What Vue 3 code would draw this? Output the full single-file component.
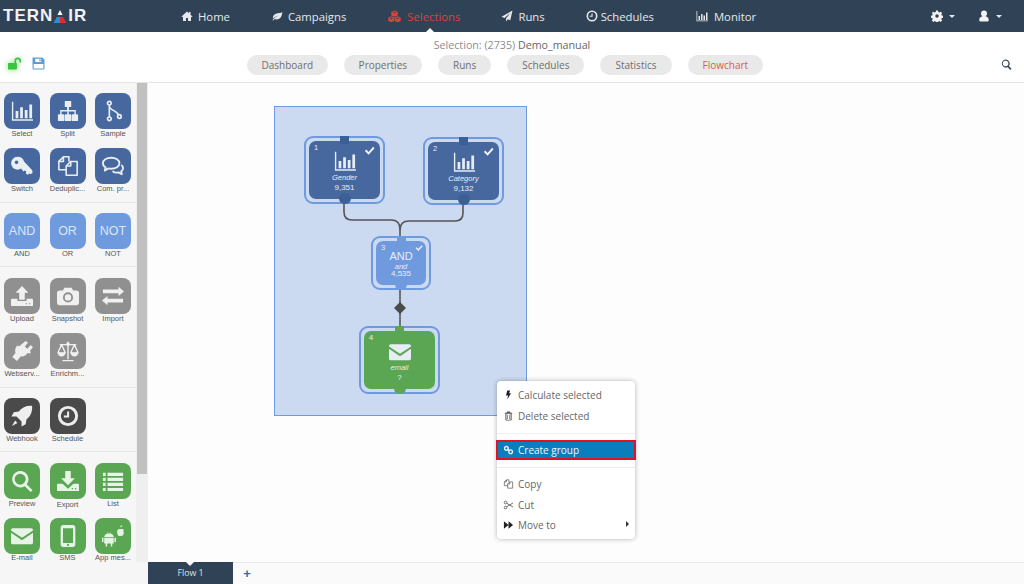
<script setup>
const nav = [
  { label: 'Home', icon: 'home' },
  { label: 'Campaigns', icon: 'leaf' },
  { label: 'Selections', icon: 'cubes', active: true },
  { label: 'Runs', icon: 'plane' },
  { label: 'Schedules', icon: 'clock' },
  { label: 'Monitor', icon: 'chart' },
]
const tabs = ['Dashboard', 'Properties', 'Runs', 'Schedules', 'Statistics', 'Flowchart']
const palette = [
  { tone: 'blue', items: [['Select', 'chart'], ['Split', 'sitemap'], ['Sample', 'fork'], ['Switch', 'key'], ['Deduplic...', 'copy'], ['Com. pr...', 'comments']] },
  { tone: 'light', items: [['AND', '', 'AND'], ['OR', '', 'OR'], ['NOT', '', 'NOT']] },
  { tone: 'grey', items: [['Upload', 'upload'], ['Snapshot', 'camera'], ['Import', 'exchange'], ['Webserv...', 'plug'], ['Enrichm...', 'scale']] },
  { tone: 'dark', items: [['Webhook', 'rocket'], ['Schedule', 'clock']] },
  { tone: 'green', items: [['Preview', 'search'], ['Export', 'download'], ['List', 'list'], ['E-mail', 'mail'], ['SMS', 'mobile'], ['App mes...', 'android']] },
]
const nodes = [
  { n: 1, cls: 'n1 blue big', icon: 'chart', name: 'Gender', value: '9,351', check: true },
  { n: 2, cls: 'n2 blue big', icon: 'chart', name: 'Category', value: '9,132', check: true },
  { n: 3, cls: 'n3 light small', word: 'AND', name: 'and', value: '4,535', check: true },
  { n: 4, cls: 'n4 green big', icon: 'mail', name: 'email', value: '?', check: false },
]
</script>

<template>
  <div class="app">
    <svg class="defs" width="0" height="0" aria-hidden="true">
      <symbol id="home" viewBox="0 0 24 24"><path d="M12 3 1 13l1.4 1.5L4 13.2V22h6v-6h4v6h6v-8.800l1.600 1.300L23 13l-4-3.600V4h-3v2.700z"/></symbol>
      <symbol id="leaf" viewBox="0 0 24 24"><path d="M23 4C20 7 12 5 7 9c-3 2.400-3.600 5.600-3 8 3-3 7-5 11-6-4 2-8 4.500-12 9l1.500 1c1-1.200 2-2.300 3-3.200 3 1.700 8 1.200 11-1.800 3.500-3.500 3.500-9 4.500-12z"/></symbol>
      <symbol id="cubes" viewBox="0 0 24 24"><path fill-rule="evenodd" d="M12 1l6 2.500V10l-6 2.500L6 10V3.500zM6 11.500l5.500 2.300v6.400L6 22.500.5 20.200v-6.400zM18 11.500l5.500 2.300v6.400L18 22.500l-5.500-2.300v-6.400zM12 3 9 4.200 12 5.500l3-1.300zM6 14l-3 1.200 3 1.300 3-1.300zM18 14l-3 1.200 3 1.300 3-1.300z"/></symbol>
      <symbol id="plane" viewBox="0 0 24 24"><path d="M23 1 1 13.500l6 2.500L19 5.500 10 17v6l3.500-4.500 5 2z"/></symbol>
      <symbol id="clock" viewBox="0 0 24 24"><path fill-rule="evenodd" d="M12 1a11 11 0 1 0 0 22 11 11 0 0 0 0-22zm0 3.200a7.800 7.800 0 1 1 0 15.600 7.800 7.800 0 0 1 0-15.600zM11 7h2.200v6.500H7.500v-2H11z"/></symbol>
      <symbol id="chart" viewBox="0 0 24 24"><path d="M1 2h1.500v19H24v1.500H1zM5 12h3v8H5zM10 8h3v12h-3zM15 11h3v9h-3zM20 5h3v15h-3z"/></symbol>
      <symbol id="cog" viewBox="0 0 24 24"><path fill-rule="evenodd" d="M10 1h4l.6 3 2.300 1 2.600-1.700 2.800 2.800-1.700 2.600 1 2.300 3 .6v4l-3 .6-1 2.300 1.700 2.600-2.800 2.800-2.600-1.700-2.300 1-.6 3h-4l-.6-3-2.300-1-2.600 1.700-2.800-2.800 1.700-2.600-1-2.300-3-.6v-4l3-.6 1-2.300L1.700 6.100l2.800-2.800 2.600 1.700 2.300-1zM12 8.500a3.500 3.500 0 1 0 0 7 3.500 3.500 0 0 0 0-7z"/></symbol>
      <symbol id="user" viewBox="0 0 24 24"><path d="M12 1a6 6 0 0 1 6 6c0 2.500-1.300 4.500-3 5.500 4 .5 6.500 3 6.500 7.500 0 2-1.500 3-3 3h-13c-1.500 0-3-1-3-3 0-4.500 2.500-7 6.500-7.500C7.300 11.500 6 9.500 6 7a6 6 0 0 1 6-6z"/></symbol>
      <symbol id="lock" viewBox="0 0 24 24"><path d="M1 11h14a1.500 1.500 0 0 1 1.500 1.500v9A1.500 1.500 0 0 1 15 23H1a1 1 0 0 1-1-1V12a1 1 0 0 1 1-1zM12 11V7a6 6 0 0 1 12 0v3h-3V7a3 3 0 0 0-6 0v4z"/></symbol>
      <symbol id="save" viewBox="0 0 24 24"><path fill-rule="evenodd" d="M2 1h17l4 4v16a2 2 0 0 1-2 2H3a2 2 0 0 1-2-2V2a1 1 0 0 1 1-1zm4 2v6h11V3zm7.500 1H16v4h-2.500zM3 13v8h18v-8z"/></symbol>
      <symbol id="find" viewBox="0 0 24 24"><path fill-rule="evenodd" d="M10 1a9 9 0 0 1 7.200 14.400L23 21.200 20.200 24l-5.800-5.800A9 9 0 1 1 10 1zm0 3a6 6 0 1 0 0 12 6 6 0 0 0 0-12z"/></symbol>
      <symbol id="sitemap" viewBox="0 0 24 24"><path d="M8.500 1h7v6.500H13V11h7.500v4.500H22a1 1 0 0 1 1 1V22a1 1 0 0 1-1 1h-5a1 1 0 0 1-1-1v-5.500a1 1 0 0 1 1-1h2V12.500h-6.200v3H14.500a1 1 0 0 1 1 1V22a1 1 0 0 1-1 1h-5a1 1 0 0 1-1-1v-5.500a1 1 0 0 1 1-1h1.700v-3H5v3h2a1 1 0 0 1 1 1V22a1 1 0 0 1-1 1H2a1 1 0 0 1-1-1v-5.500a1 1 0 0 1 1-1h1.500V11H11V7.500H8.500z"/></symbol>
      <symbol id="fork" viewBox="0 0 24 24"><g fill="none" stroke="currentColor" stroke-width="1.800"><circle cx="8" cy="3.500" r="2"/><circle cx="8" cy="20.500" r="2"/><circle cx="19" cy="18" r="2"/><path d="M8 5.500v13M8 6.500c0 5 9 5 10 10"/></g></symbol>
      <symbol id="key" viewBox="0 0 24 24"><path fill-rule="evenodd" d="M7.500 2a7 7 0 0 1 6.700 5l9 9.500.3 3-2.500 1.500-1.500-1-1 1.800-2.300-1.600.4-2.400-2-1-1.100 1.300-2.400-3.300A7 7 0 1 1 7.500 2zM6 6a2 2 0 1 0 0 4 2 2 0 0 0 0-4z"/></symbol>
      <symbol id="copy" viewBox="0 0 24 24"><g fill="none" stroke="currentColor" stroke-width="1.700" stroke-linejoin="round"><path d="M10 16H2V7l5-5h6v5"/><path d="M2 7h5V2"/><path d="M10 12l5-5h7v15H10z"/><path d="M10 12h5V7"/></g></symbol>
      <symbol id="comments" viewBox="0 0 24 24"><g fill="none" stroke="currentColor" stroke-width="2" stroke-linejoin="round"><path d="M10 3c5 0 9 2.500 9 6s-4 6-9 6c-1 0-2 0-3-.3L3 17l1-3.500C2 12.500 1 11 1 9c0-3.500 4-6 9-6z"/><path d="M21 11c1.500 1 2 2.500 2 3.500 0 1.500-1 2.500-2 3.500l.6 3-3.600-2c-2.500.5-5 0-6.500-1.500"/></g></symbol>
      <symbol id="upload" viewBox="0 0 24 24"><path fill-rule="evenodd" d="M12 1l7 7.500h-4V16H9V8.500H5zM1 15h6v2.500h10V15h6a1 1 0 0 1 1 1v6a1 1 0 0 1-1 1H1a1 1 0 0 1-1-1v-6a1 1 0 0 1 1-1zm15 5v1h1.500v-1zm3.500 0v1H21v-1z"/></symbol>
      <symbol id="download" viewBox="0 0 24 24"><path fill-rule="evenodd" d="M9 1h6v8h4.500L12 16.500 4.500 9H9zM1 15h5l6 5.500 6-5.500h5a1 1 0 0 1 1 1v6a1 1 0 0 1-1 1H1a1 1 0 0 1-1-1v-6a1 1 0 0 1 1-1zm15 4.500v1.500h1.500v-1.500zm3.500 0v1.500H21v-1.500z"/></symbol>
      <symbol id="camera" viewBox="0 0 24 24"><path fill-rule="evenodd" d="M8 3h8l1.500 3H21a3 3 0 0 1 3 3v10a3 3 0 0 1-3 3H3a3 3 0 0 1-3-3V9a3 3 0 0 1 3-3h3.500zM12 8a5.500 5.500 0 1 0 0 11 5.500 5.500 0 0 0 0-11zm0 2a3.500 3.500 0 1 1 0 7 3.500 3.500 0 0 1 0-7z"/></symbol>
      <symbol id="exchange" viewBox="0 0 24 24"><path d="M18 2l6 5-6 5V9H1V5h17zM6 12v3h17v4H6v3l-6-5z"/></symbol>
      <symbol id="plug" viewBox="0 0 24 24"><path d="M16 1l2.500 2L15 7l3 2.500 3.500-4L24 8l-3.500 4 1.500 1-2 2-1.500-1c-2 3-5 4.500-8 4l-4 5-5-4.500 3.500-4.500c-1-2-.5-5 1-7L5 8l2-2 1.500 1.200z"/></symbol>
      <symbol id="scale" viewBox="0 0 24 24"><g fill="none" stroke="currentColor" stroke-width="1.500" stroke-linejoin="round"><path d="M12 2v19M6 22.500h12M3 5h18"/><path d="M5 5 1 14h8zM19 5l-4 9h8z"/></g><path d="M1 14h8a4 4 0 0 1-8 0zM15 14h8a4 4 0 0 1-8 0z"/><circle cx="12" cy="4.500" r="2"/></symbol>
      <symbol id="rocket" viewBox="0 0 24 24"><path d="M23 1c.5 6-1.500 11-6 14.500L16 21l-4.500 2.500V18l-5.500-5.500H.5L3 8l5.500-1C12 2.500 17 .5 23 1zM4.500 17l2.500 2.500L1 23z"/></symbol>
      <symbol id="search" viewBox="0 0 24 24"><path fill-rule="evenodd" d="M10 1a9 9 0 0 1 7.100 14.500L23.500 22 21.500 24l-6.500-6.300A9 9 0 1 1 10 1zm0 3a6 6 0 1 0 0 12 6 6 0 0 0 0-12z"/></symbol>
      <symbol id="list" viewBox="0 0 24 24"><path d="M1 3h3v3.500H1zM6 3h17v3.500H6zM1 8.500h3V12H1zM6 8.500h17V12H6zM1 14h3v3.500H1zM6 14h17v3.500H6zM1 19.500h3V23H1zM6 19.500h17V23H6z"/></symbol>
      <symbol id="mail" viewBox="0 0 24 24"><path d="M2 3.500h20a2 2 0 0 1 2 2v.500L12 14 0 6v-.5a2 2 0 0 1 2-2zM0 8.500l12 8 12-8V19a2 2 0 0 1-2 2H2a2 2 0 0 1-2-2z"/></symbol>
      <symbol id="mobile" viewBox="0 0 24 24"><path fill-rule="evenodd" d="M7 0h10a3 3 0 0 1 3 3v18a3 3 0 0 1-3 3H7a3 3 0 0 1-3-3V3a3 3 0 0 1 3-3zM6.500 3.500v16h11v-16zM12 20.500a1.200 1.200 0 1 0 0 2.400 1.200 1.200 0 0 0 0-2.400z"/></symbol>
      <symbol id="android" viewBox="0 0 24 24"><g transform="translate(0 5) scale(.8)"><path d="M3 10c.3-2.500 2-4 4.500-4.400L7 4l.6-.3.7 1.700h2.400l.7-1.700.6.300-.5 1.600c2.500.4 4.200 1.900 4.500 4.400zM3 11h13v8h-2v4h-2v-4H7v4H5v-4H3zM0 11h2v6H0zM17 11h2v6h-2z"/></g><g transform="translate(3 0)"><path d="M17 1c1-.2 1.500-.6 2-1 .2 1-.3 2-1.300 2.300-.7.200-.7-.6-.7-1.300zM14.500 5c1-1 2-.8 3-.4 1-.4 2.500-.5 3.500.5-1 .8-1 2.500 0 3.400-.5 2-1.500 3.500-2.500 3.500-.8 0-1-.4-1.500-.4-.6 0-1 .4-1.500.4-1 0-2-3-2-4.500 0-1 .2-2 1-2.500z"/></g></symbol>
      <symbol id="bolt" viewBox="0 0 24 24"><path d="M9 1h7l-2.500 7H18L9 23l2-10H6z"/></symbol>
      <symbol id="trash" viewBox="0 0 24 24"><path fill-rule="evenodd" d="M8.500 1h7l1 3H21v2h-1.500v15a2 2 0 0 1-2 2h-11a2 2 0 0 1-2-2V6H3V4h4.500zM7 6.500V21h10V6.500zM9 9h1.500v10H9zM13.500 9H15v10h-1.500z"/></symbol>
      <symbol id="link" viewBox="0 0 24 24"><g fill="none" stroke="currentColor" stroke-width="3.200"><circle cx="7" cy="8" r="4.500"/><circle cx="17" cy="16" r="4.500"/><path d="M9 10l6 4"/></g></symbol>
      <symbol id="scissors" viewBox="0 0 24 24"><g fill="none" stroke="currentColor" stroke-width="2"><circle cx="5" cy="6" r="3.200"/><circle cx="5" cy="18" r="3.200"/><path d="M8 8l15 9M8 16 23 7"/></g></symbol>
      <symbol id="forward" viewBox="0 0 24 24"><path d="M1 3l11 9-11 9zM12 3l11 9-11 9z"/></symbol>
    </svg>

    <header class="topbar">
      <div class="logo">
        <span>TERN</span><svg class="logo-a" viewBox="0 0 14 13"><path d="M7 0l2.500 5h-5z" fill="#fff"/><path d="M3.800 7H7v6H.5z" fill="#2a8fd0"/><path d="M7 7h3.200l3.300 6H7z" fill="#e02b2b"/></svg><span>IR</span>
      </div>
      <nav class="mainnav">
        <a v-for="item in nav" :key="item.label" class="navitem" :class="{ active: item.active }">
          <svg class="navicon"><use :href="'#' + item.icon" /></svg>
          <span>{{ item.label }}</span>
        </a>
      </nav>
      <div class="tools">
        <span class="tool"><svg><use href="#cog" /></svg><i class="caret"></i></span>
        <span class="tool"><svg><use href="#user" /></svg><i class="caret"></i></span>
      </div>
      <i class="nav-notch"></i>
    </header>

    <section class="subbar">
      <div class="subbar-left">
        <svg class="lock"><use href="#lock" /></svg>
        <svg class="save"><use href="#save" /></svg>
      </div>
      <div class="subbar-mid">
        <div class="title">Selection: (2735) <b>Demo_manual</b></div>
        <div class="pills">
          <span v-for="t in tabs" :key="t" class="pill" :class="{ current: t === 'Flowchart' }">{{ t }}</span>
        </div>
      </div>
      <svg class="find"><use href="#find" /></svg>
    </section>

    <main class="body">
      <aside class="side">
        <div class="palette">
          <div v-for="(group, g) in palette" :key="g" class="group">
            <div v-for="item in group.items" :key="item[0]" class="cell">
              <div class="tile" :class="group.tone">
                <span v-if="item[2]" class="word">{{ item[2] }}</span>
                <svg v-else class="tile-icon"><use :href="'#' + item[1]" /></svg>
              </div>
              <div class="cell-label">{{ item[0] }}</div>
            </div>
          </div>
        </div>
        <div class="scroll"><div class="thumb"></div></div>
      </aside>

      <div class="work">
        <div class="canvas">
          <div class="selection"></div>
          <svg class="wires" width="876" height="479">
            <g fill="none" stroke="#555" stroke-width="1.600">
              <path d="M196 118V129Q196 137 204 137H243Q252 137 252 146V155" />
              <path d="M315 119V130Q315 138 307 138H261Q252 138 252 147" />
              <path d="M252 205V245" />
            </g>
            <path d="M252 219l6 6-6 6-6-6z" fill="#4a4a4a" />
          </svg>
          <div v-for="node in nodes" :key="node.n" class="node" :class="node.cls">
            <div class="node-inner">
              <i class="port-top"></i>
              <span class="num">{{ node.n }}</span>
              <svg v-if="node.check" class="check" viewBox="0 0 24 24"><path d="M2 13l3-3 5 5L20 4l3 3-13 14z"/></svg>
              <svg v-if="node.icon" class="node-icon"><use :href="'#' + node.icon" /></svg>
              <span v-else class="node-word">{{ node.word }}</span>
              <em class="node-name">{{ node.name }}</em>
              <span class="node-value">{{ node.value }}</span>
              <i class="port-bottom"></i>
            </div>
          </div>

          <ul class="menu">
            <li><svg><use href="#bolt" /></svg>Calculate selected</li>
            <li><svg class="muted"><use href="#trash" /></svg>Delete selected</li>
            <li class="sep"></li>
            <li class="hot"><svg><use href="#link" /></svg>Create group</li>
            <li class="sep sep-low"></li>
            <li><svg class="muted"><use href="#copy" /></svg>Copy</li>
            <li><svg class="muted"><use href="#scissors" /></svg>Cut</li>
            <li class="more"><svg><use href="#forward" /></svg>Move to<i class="sub-caret"></i></li>
          </ul>
        </div>
        <footer class="flowtabs">
          <div class="flowtab">Flow 1</div>
          <span class="plus">+</span>
        </footer>
      </div>
    </main>
  </div>
</template>

<style>
html, body { margin: 0; padding: 0; background: #fff; overflow: hidden; }
</style>

<style scoped>
.app { width: 1024px; height: 584px; display: flex; flex-direction: column; font-family: "Open Sans", "Liberation Sans", sans-serif; overflow: hidden; color: #666; }
.defs { position: absolute; }
.topbar { height: 32px; flex: none; background: #304255; color: #e6e9ec; display: flex; align-items: center; position: relative; box-sizing: border-box; }
.logo { width: 181px; flex: none; box-sizing: border-box; padding-left: 3px; display: flex; align-items: center; font: bold 17px "Liberation Sans", sans-serif; letter-spacing: 1px; color: #f2f2f2; }
.logo-a { width: 14px; height: 13px; margin: 0 1px 0 0; }
.mainnav { display: flex; gap: 41px; flex: 1; }
.navitem { display: flex; align-items: center; gap: 5px; font-size: 11.300px; color: #e6e9ec; white-space: nowrap; }
.navitem.active { color: #d9423b; }
.navicon { width: 12px; height: 12px; fill: currentColor; }
.navitem.active .navicon { width: 15px; height: 13px; }
.navitem:nth-child(5) { gap: 3px; }
.navitem:nth-child(6) .navicon { width: 14px; }
.tools { display: flex; gap: 23px; padding-right: 22px; }
.tool { display: flex; align-items: center; gap: 6px; }
.tool svg { width: 12px; height: 12px; fill: #f2f2f2; }
.caret { width: 0; height: 0; border: 3px solid transparent; border-top: 3px solid #e6e9ec; border-bottom: 0; }
.nav-notch { position: absolute; left: 426px; bottom: 0; width: 0; height: 0; border: 4px solid transparent; border-bottom: 4px solid #fff; border-top: 0; }

.subbar { height: 51px; flex: none; box-sizing: border-box; border-bottom: 1px solid #e3e3e3; display: flex; position: relative; background: #fff; }
.subbar-left { width: 247px; flex: none; box-sizing: border-box; padding: 25px 0 0 7px; display: flex; gap: 10px; align-items: flex-start; }
.lock { width: 15px; height: 13px; fill: #3cc33c; filter: drop-shadow(0 0 3px rgba(60, 200, 60, .7)); }
.save { width: 13px; height: 13px; fill: #5b9bd8; }
.subbar-mid { display: flex; flex-direction: column; flex: none; width: 516px; }
.title { font-size: 10.700px; line-height: 14px; padding-top: 6px; text-align: center; color: #8e8e8e; height: 17px; width: 500px; margin-left: 15px; white-space: nowrap; }
.title b { font-weight: 400; color: #666; }
.pills { display: flex; gap: 16px; }
.pill { height: 20px; line-height: 20px; padding: 0 15px; border-radius: 10px; background: #e9e9e9; font-size: 10px; color: #6f6f6f; white-space: nowrap; }
.pill:first-child { padding: 0 14.500px; }
.pill.current { color: #e0584f; }
.find { position: absolute; right: 12px; top: 27px; width: 11px; height: 11px; fill: #3f4f5d; }

.body { flex: 1; min-height: 0; display: flex; }
.side { width: 148px; flex: none; display: flex; align-items: flex-start; background: #f6f6f6; }
.palette { width: 136px; flex: none; overflow: hidden; height: 479px; }
.group { display: grid; grid-template-columns: repeat(3, 36px); column-gap: 9.500px; padding: 10px 0 0 4px; border-bottom: 1px solid #e6e6e6; height: 109px; box-sizing: content-box; }
.group:nth-child(1) { height: 109px; }
.group:nth-child(2) { height: 53px; }
.group:nth-child(3) { height: 109px; padding-top: 11px; }
.group:nth-child(4) { height: 53px; }
.group:nth-child(5) { border-bottom: 0; padding-top: 11px; }
.cell { width: 44px; margin-left: -4px; height: 55px; display: flex; flex-direction: column; align-items: center; }
.group:nth-child(2) .cell, .group:nth-child(4) .cell { height: 53px; }
.group:nth-child(5) .cell { height: 54px; }
.tile { width: 36px; height: 36px; border-radius: 8px; flex: none; display: flex; align-items: center; justify-content: center; color: #e9eef5; }
.tile.blue { background: #46689f; }
.tile.light { background: #6f9ade; color: #dbe6f7; }
.tile.grey { background: #909090; color: #f0f0f0; }
.tile.dark { background: #4a4a4a; color: #eee; }
.tile.green { background: #5aa653; color: #e8f3e7; }
.tile-icon { width: 22px; height: 22px; fill: currentColor; }
.word { font: 12.500px "Liberation Sans", sans-serif; }
.cell-label { font: 7.500px/11px "Liberation Sans", sans-serif; color: #555; margin-top: -1.500px; white-space: nowrap; }
.group:nth-child(5) .cell:nth-child(2) .cell-label { margin-top: 0; }
.scroll { width: 12px; height: 479px; flex: none; background: #efefef; }
.thumb { width: 10px; margin-left: 1px; height: 391px; background: #c1c1c1; }

.work { flex: 1; display: flex; flex-direction: column; min-width: 0; background: #fdfdfd; }
.canvas { flex: 1; position: relative; min-height: 0; }
.selection { position: absolute; left: 126px; top: 23px; width: 251px; height: 308px; background: #cbdaf1; border: 1px solid #6f9ade; }
.wires { position: absolute; left: 0; top: 0; }
.node { position: absolute; box-sizing: border-box; border: 2px solid #6f9ade; border-radius: 9px; padding: 3px; }
.n1 { left: 156px; top: 53px; width: 81px; height: 68px; }
.n2 { left: 275px; top: 54px; width: 81px; height: 68px; }
.n3 { left: 223px; top: 153px; width: 60px; height: 54px; }
.n4 { left: 211px; top: 243px; width: 81px; height: 68px; }
.node-inner { position: relative; height: 100%; border-radius: 7px; display: flex; flex-direction: column; align-items: center; color: #e7edf6; }
.blue .node-inner { background: #46689f; }
.light .node-inner { background: #6f9ade; }
.green .node-inner { background: #5aa653; }
.blue .port-top, .blue .port-bottom { background: #3c5f96; }
.light .port-top, .light .port-bottom { background: #6f9ade; }
.green .port-top, .green .port-bottom { background: #5aa653; }
.port-top { position: absolute; left: 50%; top: -5px; width: 9px; height: 8px; margin-left: -4.500px; }
.port-bottom { position: absolute; left: 50%; bottom: -5px; width: 12px; height: 11px; margin-left: -6px; border-radius: 50%; }
.num { position: absolute; left: 5px; top: 2px; font: 7.500px/10px "Liberation Sans", sans-serif; }
.check { position: absolute; right: 5px; top: 4px; width: 11px; height: 11px; fill: #f1f4f9; }
.node-icon { width: 22px; height: 22px; margin-top: 9px; fill: currentColor; flex: none; }
.node-word { font: 11px/12px "Liberation Sans", sans-serif; margin-top: 9px; }
.node-name { font: italic 7.500px/10px "Liberation Sans", sans-serif; }
.node-value { font: 8px/10px "Liberation Sans", sans-serif; }
.big .node-name { margin-top: 1px; }
.n3 .node-word { margin-top: 9px; }
.n3 .node-name { margin-top: 1px; line-height: 7px; }
.n3 .node-value { line-height: 7px; }
.n3 .check { width: 8px; height: 8px; top: 3px; right: 3px; }
.n4 .node-icon { margin-top: 10px; }
.n4 .node-name { margin-top: 0; }

.menu { position: absolute; left: 349px; top: 298px; width: 138px; height: 158px; margin: 0; padding: 3px 0; list-style: none; background: #fff; border-radius: 4px; box-shadow: 0 0 5px rgba(0, 0, 0, .3); box-sizing: border-box; font-size: 10px; color: #666; }
.menu li { height: 21px; display: flex; align-items: center; padding-left: 6px; gap: 4px; position: relative; white-space: nowrap; }
.menu svg { width: 11px; height: 10px; fill: #222; color: #222; flex: none; }
.menu svg.muted { fill: #555; color: #555; }
.menu .sep { height: 1px; padding: 0; background: #eee; margin: 7px 0 6px; }
.menu .sep-low { margin-bottom: 5px; }
.menu .hot { height: 20px; margin: 0 -1px; box-sizing: border-box; background: #0a7dbd; color: #f2f7fb; border: 2px solid #e0141f; padding-left: 5px; }
.menu .hot svg { fill: #e8f2f9; color: #e8f2f9; }
.menu .more { margin-top: -1px; }
.sub-caret { position: absolute; right: 6px; top: 7px; border: 3px solid transparent; border-left: 3px solid #333; border-right: 0; }

.flowtabs { height: 22px; flex: none; display: flex; align-items: stretch; background: #fafafa; border-top: 1px solid #ececec; box-sizing: border-box; }
.flowtab { width: 85px; background: #304255; color: #dfe3e7; font-size: 8.800px; text-align: center; line-height: 23px; position: relative; margin-top: -1px; }
.flowtab::before { content: ""; position: absolute; left: 38px; top: 0; border: 4px solid transparent; border-top: 4px solid #fff; border-bottom: 0; }
.plus { width: 28px; text-align: center; font: bold 13px/21px "Liberation Sans", sans-serif; color: #3d6a9e; }
</style>
